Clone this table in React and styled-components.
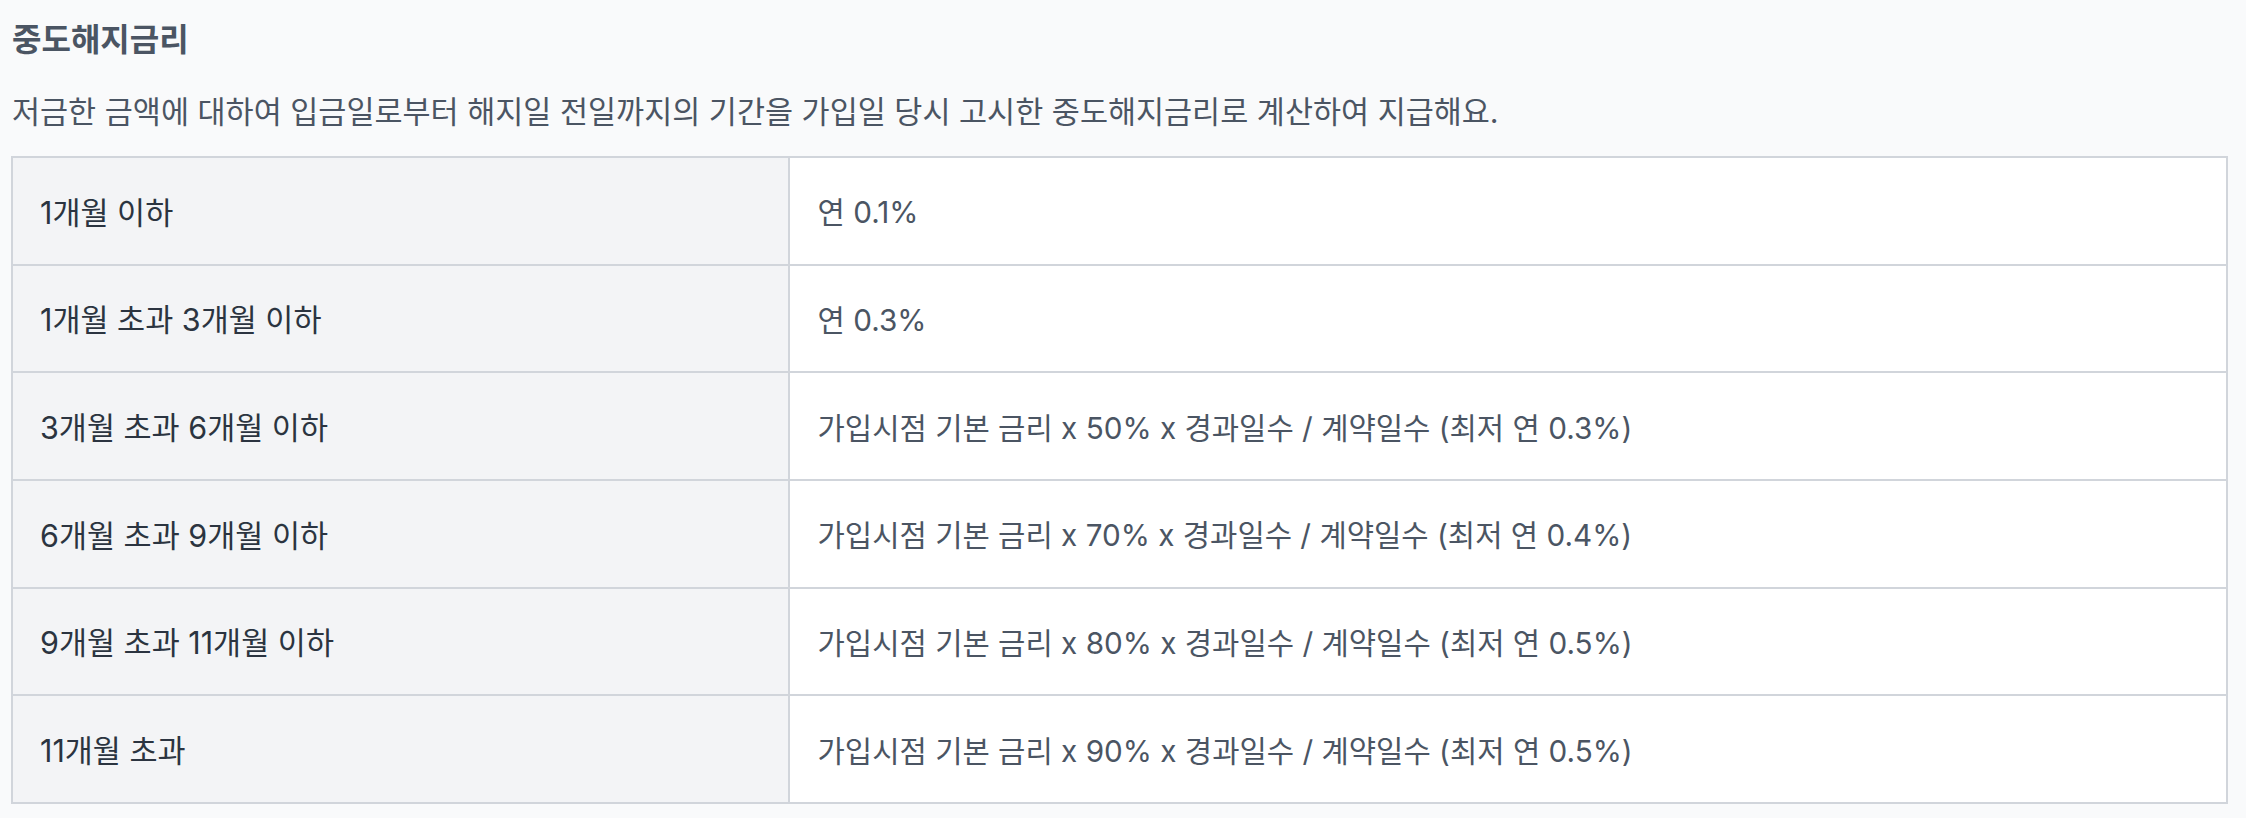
import React from "react";
import styled, { createGlobalStyle } from "styled-components";

const Global = createGlobalStyle`
  html, body { margin: 0; padding: 0; background: #f9fafb; }
  body { font-family: "Inter", "Noto Sans CJK KR", sans-serif; }
`;

const Page = styled.div`
  padding: 20px 18px 14px 11px;
`;

const Title = styled.h2`
  margin: 0 0 0 1px;
  font-size: 32px;
  line-height: 40px;
  font-weight: 700;
  color: #4b5563;
`;

const Desc = styled.p`
  margin: 32px 0 24px 1px;
  font-size: 30.5px;
  line-height: 40px;
  font-weight: 400;
  color: #4b5563;
`;

const Table = styled.div`
  display: grid;
  grid-template-columns: 35% 1fr;
  grid-template-rows: repeat(6, 1fr);
  gap: 2px;
  padding: 2px;
  height: 648px;
  box-sizing: border-box;
  background: #d1d5db;
`;

const Cell = styled.div`
  display: flex;
  align-items: center;
  padding: 0 28px;
  font-weight: 400;
  background: ${(p) => (p.$head ? "#f3f4f6" : "#ffffff")};
  color: ${(p) => (p.$head ? "#2b3440" : "#4b5563")};
  font-size: ${(p) => (p.$head ? "30.5px" : "29.7px")};
  padding-left: ${(p) => (p.$head ? "27px" : "28px")};
`;

const rows = [
  ["1개월 이하", "연 0.1%"],
  ["1개월 초과 3개월 이하", "연 0.3%"],
  ["3개월 초과 6개월 이하", "가입시점 기본 금리 x 50% x 경과일수 / 계약일수 (최저 연 0.3%)"],
  ["6개월 초과 9개월 이하", "가입시점 기본 금리 x 70% x 경과일수 / 계약일수 (최저 연 0.4%)"],
  ["9개월 초과 11개월 이하", "가입시점 기본 금리 x 80% x 경과일수 / 계약일수 (최저 연 0.5%)"],
  ["11개월 초과", "가입시점 기본 금리 x 90% x 경과일수 / 계약일수 (최저 연 0.5%)"],
];

export default function App() {
  return (
    <Page>
      <Global />
      <Title>중도해지금리</Title>
      <Desc>
        저금한 금액에 대하여 입금일로부터 해지일 전일까지의 기간을 가입일 당시 고시한 중도해지금리로 계산하여 지급해요.
      </Desc>
      <Table>
        {rows.map(([k, v]) => (
          <React.Fragment key={k}>
            <Cell $head>{k}</Cell>
            <Cell>{v}</Cell>
          </React.Fragment>
        ))}
      </Table>
    </Page>
  );
}
